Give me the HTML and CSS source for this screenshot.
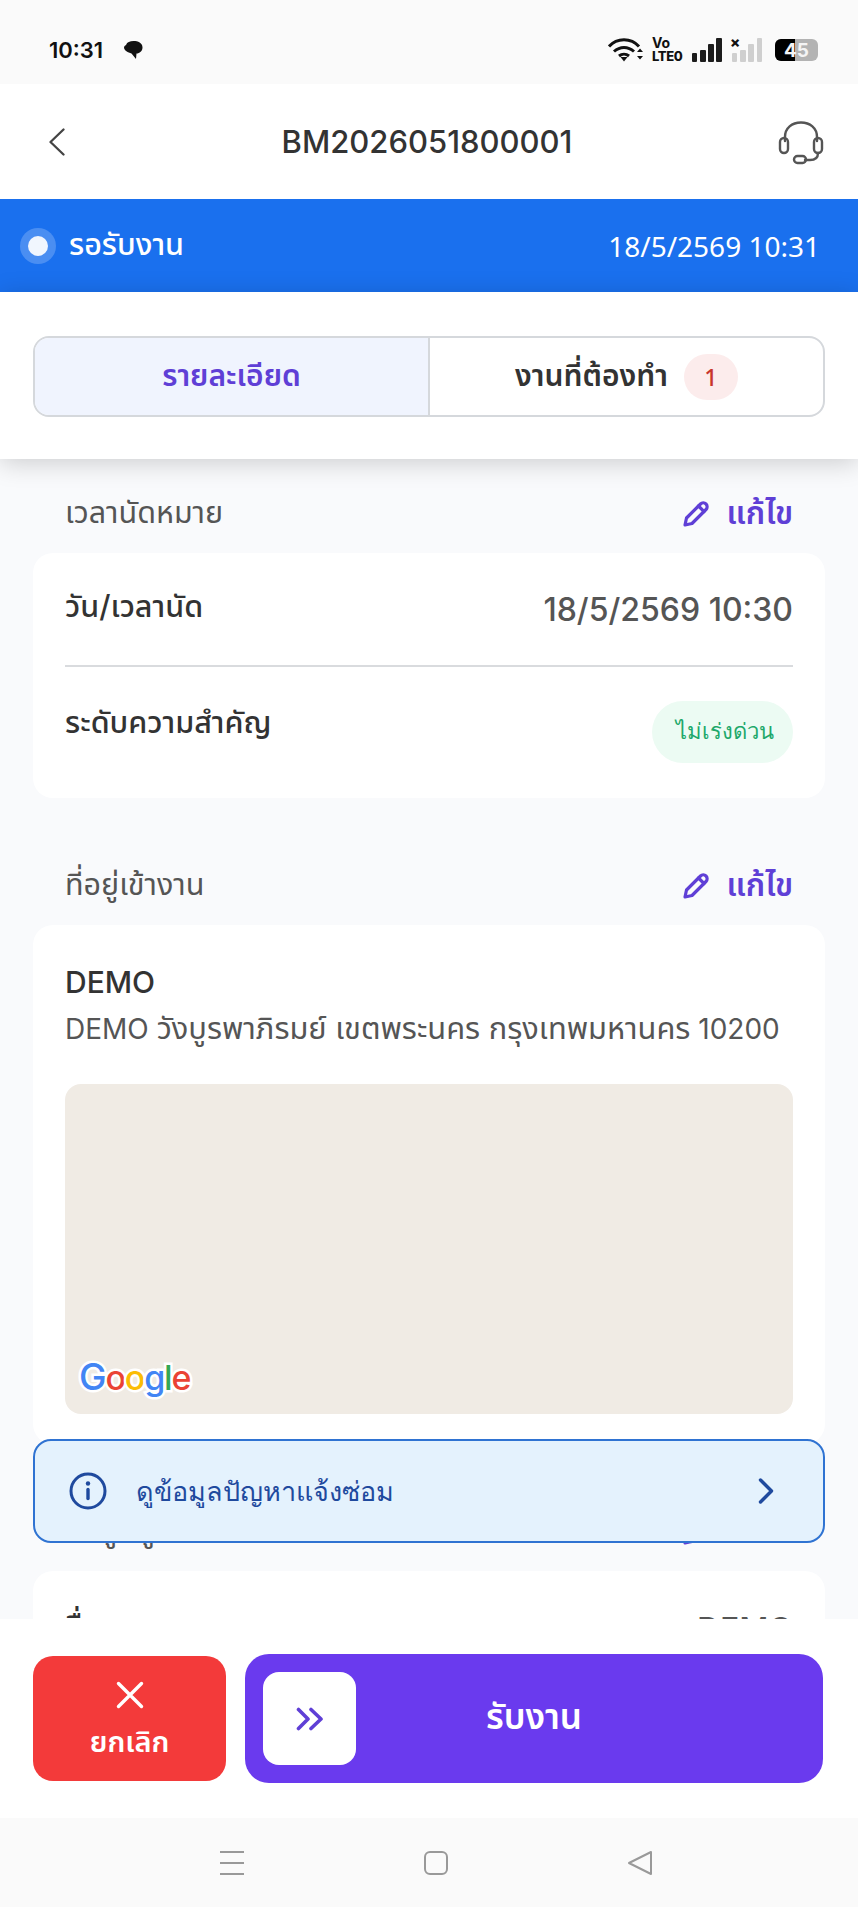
FILE: index.html
```html
<!DOCTYPE html>
<html lang="th">
<head>
<meta charset="utf-8">
<title>BM2026051800001</title>
<link rel="stylesheet" href="styles.css">
</head>
<body>
<div class="screen">
  <div class="status">
    <div class="status-left">
      <span class="clock">10:31</span>
      <svg class="bubble" width="20" height="20" viewBox="0 0 20 20"><path d="M3 5C4 2 7 1 10.500 1c4.500 0 9 1.800 9 6.500 0 3.500-3 6-6 6l-.5 5.500-4.500-5.500C5 12.500 1 10.500 1 7.500c0-1 1-2 2-2.500z" fill="#111"/></svg>
    </div>
    <div class="status-right">
      <svg class="wifi" width="36" height="24" viewBox="0 0 36 24" fill="none" stroke="#111" stroke-width="3"><path d="M1 8.500C9-.5 23-.5 31 8.500"/><path d="M6 13.500c6-5.500 14-5.500 20 0"/><path d="M11 18c3-2.500 7-2.500 10 0" /><path d="M12.500 19h7L16 23.500z" fill="#111" stroke="none"/><path d="M29 14h6l-3-3.500zM29 18h6l-3 3.500z" fill="#111" stroke="none"/></svg>
      <svg class="volte" width="33" height="26" viewBox="0 0 33 26"><text class="vo" x="0" y="11">Vo</text><text class="lte" x="0" y="24">LTE0</text></svg>
      <div class="bars"><i class="b1"></i><i class="b2"></i><i class="b3"></i><i class="b4"></i></div>
      <div class="bars off"><span class="xmark">×</span><i class="b1"></i><i class="b2"></i><i class="b3"></i><i class="b4"></i></div>
      <div class="battery"><span class="battery-fill"></span><span class="battery-num">45</span></div>
    </div>
  </div>

  <header class="topbar">
    <svg class="back" width="16" height="28" viewBox="0 0 16 28" fill="none" stroke="#444" stroke-width="2.300" stroke-linecap="round" stroke-linejoin="round"><path d="M14.500 1.500 1.500 14l13 12.500"/></svg>
    <h1 class="title">BM2026051800001</h1>
    <svg class="headset" width="46" height="44" viewBox="0 0 46 44" fill="none" stroke="#555" stroke-width="2.400" stroke-linecap="round"><path d="M7 20v-4C7 7 14 1.500 23 1.500S39 7 39 16v4"/><rect x="2" y="17" width="8" height="15" rx="4"/><rect x="36" y="17" width="8" height="15" rx="4"/><path d="M40 32c0 5-3 7-8 7h-5"/><rect x="16" y="35" width="12" height="7" rx="3.500"/></svg>
  </header>

  <div class="band">
    <div class="band-left"><span class="dot"><span class="dot-core"></span></span><span class="band-label">รอรับงาน</span></div>
    <span class="band-date">18/5/2569 10:31</span>
  </div>

  <div class="tabs-wrap">
    <div class="tabs">
      <div class="tab active">รายละเอียด</div>
      <div class="tab"><span>งานที่ต้องทำ</span> <span class="badge">1</span></div>
    </div>
  </div>

  <main class="content">
    <section class="section">
      <div class="section-head">
        <span class="section-title">เวลานัดหมาย</span>
        <span class="edit"><svg width="28" height="28" viewBox="0 0 28 28" fill="none" stroke="#5f3fd6" stroke-width="3.200" stroke-linejoin="round" stroke-linecap="round"><path d="M3 25l1.500-7L18.500 4c1.500-1.500 4-1.500 5.500 0s1.500 4 0 5.500L10 23.500z"/><path d="M16.500 6l5.500 5.500"/></svg>แก้ไข</span>
      </div>
      <div class="card">
        <div class="row row-date">
          <span class="row-label">วัน/เวลานัด</span>
          <span class="row-value">18/5/2569 10:30</span>
        </div>
        <div class="row row-priority">
          <span class="row-label">ระดับความสำคัญ</span>
          <span class="pill">ไม่เร่งด่วน</span>
        </div>
      </div>
    </section>

    <section class="section">
      <div class="section-head">
        <span class="section-title">ที่อยู่เข้างาน</span>
        <span class="edit"><svg width="28" height="28" viewBox="0 0 28 28" fill="none" stroke="#5f3fd6" stroke-width="3.200" stroke-linejoin="round" stroke-linecap="round"><path d="M3 25l1.500-7L18.500 4c1.500-1.500 4-1.500 5.500 0s1.500 4 0 5.500L10 23.500z"/><path d="M16.500 6l5.500 5.500"/></svg>แก้ไข</span>
      </div>
      <div class="card card-address">
        <div class="addr-name">DEMO</div>
        <div class="addr-line">DEMO <span class="th">วังบูรพาภิรมย์ เขตพระนคร กรุงเทพมหานคร</span> 10200</div>
        <div class="map">
          <span class="google"><span class="g-blue g-cap">G</span><span class="g-red">o</span><span class="g-yellow">o</span><span class="g-blue">g</span><span class="g-green">l</span><span class="g-red">e</span></span>
        </div>
      </div>
    </section>

    <section class="section">
      <div class="section-head">
        <span class="section-title">ข้อมูลผู้ติดต่อ</span>
        <span class="edit"><svg width="28" height="28" viewBox="0 0 28 28" fill="none" stroke="#5f3fd6" stroke-width="3.200" stroke-linejoin="round" stroke-linecap="round"><path d="M3 25l1.500-7L18.500 4c1.500-1.500 4-1.500 5.500 0s1.500 4 0 5.500L10 23.500z"/><path d="M16.500 6l5.500 5.500"/></svg>แก้ไข</span>
      </div>
      <div class="card card-contact">
        <div class="row row-date">
          <span class="row-label">ชื่อ</span>
          <span class="row-value">DEMO</span>
        </div>
      </div>
    </section>

    <div class="notice">
      <svg width="38" height="38" viewBox="0 0 38 38" fill="none"><circle cx="19" cy="19" r="17" stroke="#1f4a9e" stroke-width="3"/><path d="M19 17.500v9" stroke="#1f4a9e" stroke-width="3.400" stroke-linecap="round"/><circle cx="19" cy="11.500" r="2.200" fill="#1f4a9e"/></svg>
      <span class="notice-text">ดูข้อมูลปัญหาแจ้งซ่อม</span>
      <svg class="notice-arrow" width="16" height="26" viewBox="0 0 16 26" fill="none" stroke="#1f4a9e" stroke-width="3.400" stroke-linecap="round" stroke-linejoin="round"><path d="M2.500 2 13.500 13 2.500 24"/></svg>
    </div>
  </main>

  <div class="actions">
    <button class="btn-cancel">
      <svg width="28" height="28" viewBox="0 0 28 28" fill="none" stroke="#fff" stroke-width="3.400" stroke-linecap="round"><path d="M2.500 2.500l23 23M25.500 2.500l-23 23"/></svg>
      <span>ยกเลิก</span>
    </button>
    <div class="slide">
      <span class="slide-knob"><svg width="28" height="24" viewBox="0 0 28 24" fill="none" stroke="#5f3fd6" stroke-width="3.600" stroke-linecap="round" stroke-linejoin="round"><path d="M2.500 2.500 12 12l-9.500 9.500"/><path d="M15 2.500 25 12l-10 9.500"/></svg></span>
      <span class="slide-label">รับงาน</span>
    </div>
  </div>

  <nav class="navbar">
    <svg width="26" height="26" viewBox="0 0 26 26" fill="none" stroke="#999" stroke-width="2"><path d="M1 2h24M1 13h24M1 24h24"/></svg>
    <svg width="26" height="26" viewBox="0 0 26 26" fill="none" stroke="#999" stroke-width="2"><rect x="2" y="2" width="22" height="22" rx="5"/></svg>
    <svg width="26" height="26" viewBox="0 0 26 26" fill="none" stroke="#999" stroke-width="2" stroke-linejoin="round"><path d="M24 2v22L2 13z"/></svg>
  </nav>
</div>
</body>
</html>
```

FILE: styles.css
```css
* { box-sizing: border-box; }
html, body { margin: 0; padding: 0; }
body {
  background: #fff;
  font-family: "Inter", "Noto Sans Thai", "Noto Sans", sans-serif;
  color: #333;
}
.screen {
  width: 858px;
  height: 1907px;
  display: flex;
  flex-direction: column;
  overflow: hidden;
}

/* status bar */
.status {
  height: 84px;
  flex: none;
  background: #fafafa;
  display: flex;
  align-items: center;
  justify-content: space-between;
  padding: 16px 40px 0 49px;
  color: #111;
}
.status-left { display: flex; align-items: center; gap: 20px; }
.clock { font-size: 22px; font-weight: 600; }
.status-right { display: flex; align-items: center; }
.wifi { margin-right: 8px; }
.volte { margin-right: 7px; fill: #111; overflow: visible; }
.vo { font-size: 14px; font-weight: 700; }
.lte { font-size: 13px; font-weight: 800; letter-spacing: -0.4px; }
.bars { display: flex; align-items: flex-end; gap: 2.700px; height: 24px; position: relative; margin-right: 10px; }
.bars i { display: block; width: 5.500px; background: #1c1c1c; border-radius: 1px; }
.b1 { height: 9px; } .b2 { height: 12px; } .b3 { height: 18px; } .b4 { height: 24px; }
.bars.off { margin-right: 13px; }
.bars.off i { background: #cfcfcf; }
.xmark { position: absolute; left: -2px; top: -6px; font-size: 15px; font-weight: 800; color: #111; }
.battery { width: 43px; height: 22px; border-radius: 6px; background: #b3b3b3; position: relative; display: flex; align-items: center; justify-content: center; }
.battery-fill { position: absolute; left: 0; top: 0; bottom: 0; width: 20px; background: #000; border-radius: 6px 0 0 6px; }
.battery-num { position: relative; color: #f4f4f4; font-size: 19px; font-weight: 700; }

/* top bar */
.topbar {
  height: 115px;
  flex: none;
  background: #fff;
  display: flex;
  align-items: center;
  justify-content: space-between;
  padding: 0 34px 0 49px;
}
.title { margin: 0 0 0 11px; font-size: 31px; font-weight: 500; color: #333; }
.headset { margin-top: 3px; }

/* status band */
.band {
  height: 93px;
  flex: none;
  background: #1a70ee;
  color: #fff;
  display: flex;
  align-items: center;
  justify-content: space-between;
  padding: 0 38px 0 20px;
}
.band-left { display: flex; align-items: center; gap: 13px; }
.dot { width: 36px; height: 36px; border-radius: 50%; background: #4a8ef2; display: flex; align-items: center; justify-content: center; }
.dot-core { width: 20px; height: 20px; border-radius: 50%; background: #f1f6fe; }
.band-label { font-size: 30.500px; font-weight: 500; }
.band-date { font-size: 28px; font-family: "Noto Sans", sans-serif; }

/* tabs */
.tabs-wrap {
  height: 167px;
  flex: none;
  background: #fff;
  padding: 44px 33px 0;
  box-shadow: 0 4px 24px rgba(0, 0, 0, .18);
  position: relative;
  z-index: 2;
}
.tabs {
  height: 81px;
  border: 2px solid #d5d8dc;
  border-radius: 16px;
  overflow: hidden;
  display: flex;
}
.tab {
  flex: 1;
  display: flex;
  align-items: center;
  justify-content: center;
  gap: 16px;
  font-size: 30px;
  font-weight: 600;
  color: #333;
}
.tab.active { background: #f0f4fe; color: #5f3fd6; border-right: 2px solid #d5d8dc; }
.badge {
  width: 54px;
  height: 46px;
  border-radius: 23px;
  background: #fcecec;
  color: #c8352c;
  display: flex;
  align-items: center;
  justify-content: center;
  font-size: 23px;
  font-weight: 500;
  font-family: "Noto Sans", sans-serif;
}

/* content */
.content {
  flex: 1;
  min-height: 0;
  background: #f9fafc;
  padding: 0 33px;
  overflow: hidden;
  position: relative;
}
.section-head {
  height: 94px;
  padding: 16px 32px 0;
  display: flex;
  align-items: center;
  justify-content: space-between;
}
.section + .section { margin-top: 33px; }
.section-title { font-size: 30.500px; color: #555; }
.edit { display: flex; align-items: center; gap: 17px; font-size: 31.500px; font-weight: 600; color: #5f3fd6; }
.card {
  background: #fff;
  border-radius: 20px;
  padding: 0 32px;
}
.row {
  display: flex;
  justify-content: space-between;
  align-items: center;
}
.row-label { font-size: 30.500px; font-weight: 500; color: #333; }
.row-value { font-size: 32px; font-weight: 500; color: #555; }
.row-date { height: 114px; border-bottom: 2px solid #d9dbde; }
.row-date .row-label { margin-bottom: 2px; }
.row-priority { height: 131px; padding-bottom: 2px; }
.row-priority .row-label { margin-bottom: 16px; }
.pill {
  width: 141px;
  height: 62px;
  border-radius: 31px;
  background: #ecfbf3;
  color: #20a86a;
  font-size: 22px;
  font-weight: 500;
  font-family: "Noto Sans", sans-serif;
  display: flex;
  align-items: center;
  justify-content: center;
  padding-left: 5px;
}
.card-address { padding: 32px 32px 30px; }
.addr-name { font-size: 30px; font-weight: 500; line-height: 50px; color: #333; }
.addr-line { font-size: 28px; line-height: 42px; height: 42px; color: #555; white-space: nowrap; }
.addr-line .th { font-size: 30.800px; }
.map {
  margin-top: 35px;
  height: 330px;
  border-radius: 16px;
  background: #f0ebe4;
  position: relative;
}
.google {
  position: absolute;
  left: 14px;
  bottom: 16px;
  font-family: "Inter", sans-serif;
  font-size: 34px;
  font-weight: 500;
  letter-spacing: -1.200px;
  line-height: 40px;
  -webkit-text-stroke: 5px #fff;
  paint-order: stroke fill;
}
.g-cap { font-size: 37px; }
.g-blue { color: #4285f4; }
.g-red { color: #ea4335; }
.g-yellow { color: #fbbc05; }
.g-green { color: #34a853; }
.card-contact { height: 120px; }
.card-contact .row-date { border-bottom: 0; height: 116px; }

/* floating notice */
.notice {
  position: absolute;
  left: 33px;
  right: 33px;
  top: 980px;
  height: 104px;
  border: 2px solid #2f73d2;
  border-radius: 18px;
  background: #e4f2fd;
  display: flex;
  align-items: center;
  padding: 0 49px 0 34px;
  gap: 29px;
  color: #1f4a9e;
  z-index: 3;
}
.notice-text { flex: 1; font-size: 27px; font-family: "Noto Sans", sans-serif; }

/* actions */
.actions {
  height: 199px;
  flex: none;
  background: #fff;
  display: flex;
  align-items: center;
  gap: 19px;
  padding: 0 35px 0 33px;
  position: relative;
  z-index: 2;
}
.btn-cancel {
  width: 193px;
  height: 125px;
  border: 0;
  border-radius: 20px;
  background: #f33a3a;
  color: #fff;
  font-family: inherit;
  font-size: 29px;
  font-weight: 600;
  display: flex;
  flex-direction: column;
  align-items: center;
  justify-content: center;
  gap: 12px;
  padding: 8px 0 0;
}
.slide {
  flex: 1;
  height: 129px;
  border-radius: 24px;
  background: #6a3aee;
  display: flex;
  align-items: center;
  padding: 0 18px;
  color: #fff;
}
.slide-knob {
  width: 93px;
  height: 93px;
  border-radius: 16px;
  background: #fff;
  display: flex;
  align-items: center;
  justify-content: center;
  flex: none;
}
.slide-label { flex: 1; text-align: center; font-size: 35px; font-weight: 600; padding-right: 93px; }

/* nav */
.navbar {
  height: 89px;
  flex: none;
  background: #fafafa;
  display: flex;
  align-items: flex-start;
  justify-content: center;
  padding: 32px 0 0 14px;
  gap: 178px;
}
```
